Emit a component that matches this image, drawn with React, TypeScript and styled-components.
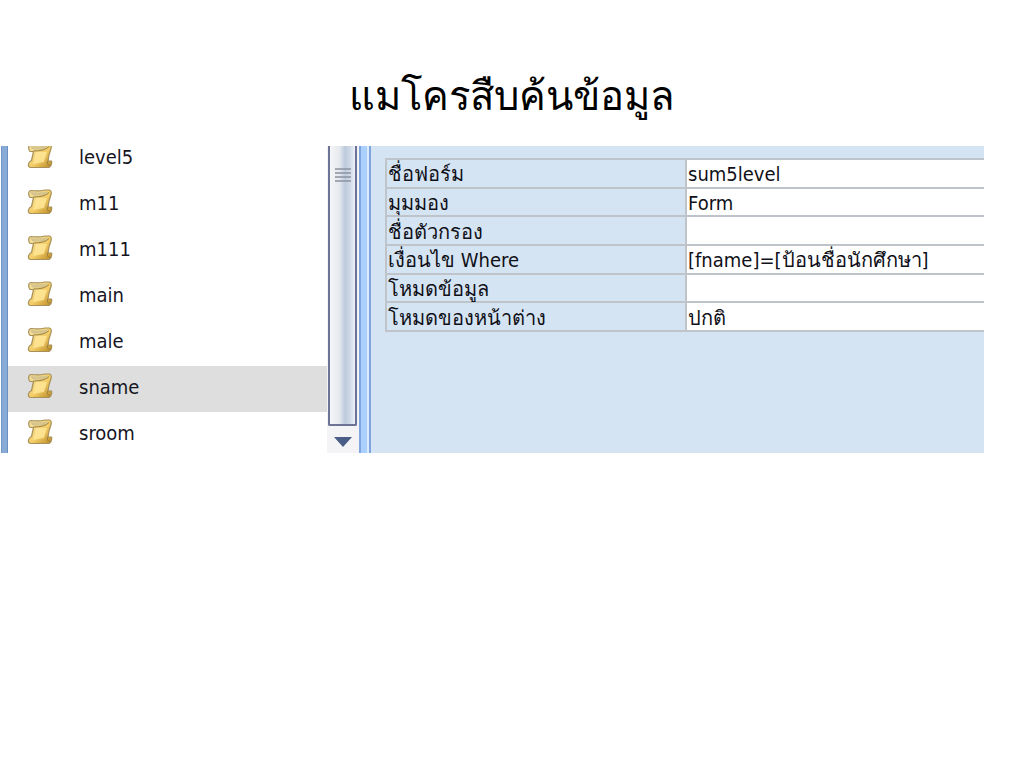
import React from "react";
import styled, { createGlobalStyle } from "styled-components";

const GlobalStyle = createGlobalStyle`
  *, *::before, *::after { box-sizing: border-box; }
  body {
    margin: 0;
    background: #fff;
    color: #101018;
    font-family: "DejaVu Sans Condensed", "Noto Sans", sans-serif;
    font-size: 20px;
    line-height: 24px;
  }
`;

const Slide = styled.main`
  padding: 0 40px 0 1px;
`;

const Title = styled.h1`
  margin: 0 -40px 0 -1px;
  padding-top: 61px;
  height: 146px;
  color: #000;
  font-family: "Angsana New", "Liberation Serif", serif;
  font-size: 40px;
  line-height: 72px;
  font-weight: 400;
  text-align: center;
`;

const Window = styled.section`
  display: flex;
  height: 307px;
  overflow: hidden;
  background: #d5e4f3;
`;

const Frame = styled.div`
  flex: none;
  width: 7px;
  background: #87aad6;
  border-left: 1px solid #6f97cb;
  border-right: 1px solid #6a90c4;
`;

const NavList = styled.ul`
  display: flex;
  flex-direction: column;
  justify-content: flex-end;
  flex: none;
  width: 319px;
  margin: 0 0 -5px;
  padding: 0;
  list-style: none;
  background: #fff;
`;

const NavItem = styled.li<{ $selected?: boolean }>`
  flex: none;
  height: 46px;
  background: ${(p) => (p.$selected ? "#dedede" : "#fff")};
`;

const NavLink = styled.a`
  display: flex;
  align-items: center;
  gap: 26px;
  height: 100%;
  padding: 0 19px 4px;
  color: #15151f;
  text-decoration: none;

  svg {
    margin-bottom: 2px;
  }
`;

const ScrollBar = styled.div`
  display: flex;
  flex-direction: column;
  flex: none;
  width: 32px;
  padding: 0 2px 0 1px;
  background: #f4f4f6;
`;

const Thumb = styled.div`
  display: flex;
  flex: 1;
  justify-content: center;
  padding-top: 22px;
  border: 2px solid #6d7297;
  border-top: 0;
  border-radius: 0 0 2px 2px;
  background: linear-gradient(90deg, #f4f5f7 0%, #e6e9ee 38%, #bccbdd 60%, #ccd8e6 78%, #edf1f8 100%);
`;

const ScrollButton = styled.button`
  height: 27px;
  padding: 4px 0 0;
  border: 0;
  background: transparent;
  line-height: 0;
`;

const Splitter = styled.div`
  flex: none;
  width: 12px;
  border: 2px solid #7fa5df;
  border-width: 0 2px;
  background: linear-gradient(90deg, #a9d0ff 0 6px, #dceafa 6px 8px);
`;

const Editor = styled.div`
  flex: 1;
  min-width: 0;
  padding: 12px 0 0 14px;
`;

const Grid = styled.table`
  width: 100%;
  height: 174px;
  table-layout: fixed;
  border-collapse: collapse;
`;

const Label = styled.th`
  width: 300px;
  padding: 2px 1px 0;
  border: 2px solid #bfc4cb;
  font-weight: 400;
  text-align: left;
  white-space: nowrap;
`;

const Value = styled.td`
  padding: 2px 1px 0;
  border: 2px solid #bfc4cb;
  border-right: 0;
  background: #fff;
  white-space: nowrap;
`;

const items = ["level5", "m11", "m111", "main", "male", "sname", "sroom"];

const rows: [string, string][] = [
  ["ชื่อฟอร์ม", "sum5level"],
  ["มุมมอง", "Form"],
  ["ชื่อตัวกรอง", ""],
  ["เงื่อนไข Where", "[fname]=[ป้อนชื่อนักศึกษา]"],
  ["โหมดข้อมูล", ""],
  ["โหมดของหน้าต่าง", "ปกติ"],
];

function MacroIcon() {
  return (
    <svg width="26" height="26" viewBox="0 0 26 26" aria-hidden="true">
      <path
        d="M4 1.500Q12 2.500 18 1H22.500Q25 2 24 5.500L22 12L21 18H24.500Q25.500 22 22 24.500H4Q1 24.500 1.500 21Q2 18.500 4.500 17.500L6.500 8.500H3Q1 6 2 3Q2.500 1.500 4 1.500Z"
        fill="url(#scroll)"
        stroke="#a89058"
        strokeWidth="1.200"
        strokeLinejoin="round"
      />
      <path d="M3.500 3Q12 4 21 2.500Q20 6 15 6.500H6Q4 6 3.500 3Z" fill="#d5c48e" />
      <path d="M9 9H20L17 19L6 21Z" fill="#ffe79a" opacity="0.800" />
      <path d="M6.500 8Q18 8 22 3.500M20.500 18Q19.500 22 23 22.500" fill="none" stroke="#9a803f" strokeWidth="1" />
      <defs>
        <linearGradient id="scroll" x1="0" y1="0" x2="1" y2="1">
          <stop offset="0" stopColor="#f3e3ab" />
          <stop offset="0.550" stopColor="#f3cd66" />
          <stop offset="1" stopColor="#b98725" />
        </linearGradient>
      </defs>
    </svg>
  );
}

export default function App() {
  return (
    <>
      <GlobalStyle />
      <Slide lang="th">
        <Title>แมโครสืบค้นข้อมูล</Title>
        <Window>
          <Frame />
          <NavList>
            {items.map((name) => (
              <NavItem key={name} $selected={name === "sname"}>
                <NavLink href={"#" + name}>
                  <MacroIcon />
                  {name}
                </NavLink>
              </NavItem>
            ))}
          </NavList>
          <ScrollBar>
            <Thumb>
              <svg width="16" height="14" viewBox="0 0 16 14" aria-hidden="true">
                <path d="M0 1H16M0 5H16M0 9H16M0 13H16" stroke="#8b929e" strokeWidth="1.500" />
              </svg>
            </Thumb>
            <ScrollButton type="button" aria-label="Scroll down">
              <svg width="18" height="10" viewBox="0 0 18 10" aria-hidden="true">
                <path d="M0 0H18L9 10Z" fill="#4a5d86" />
              </svg>
            </ScrollButton>
          </ScrollBar>
          <Splitter />
          <Editor>
            <Grid>
              <tbody>
                {rows.map(([label, value]) => (
                  <tr key={label}>
                    <Label scope="row">{label}</Label>
                    <Value>{value}</Value>
                  </tr>
                ))}
              </tbody>
            </Grid>
          </Editor>
        </Window>
      </Slide>
    </>
  );
}
